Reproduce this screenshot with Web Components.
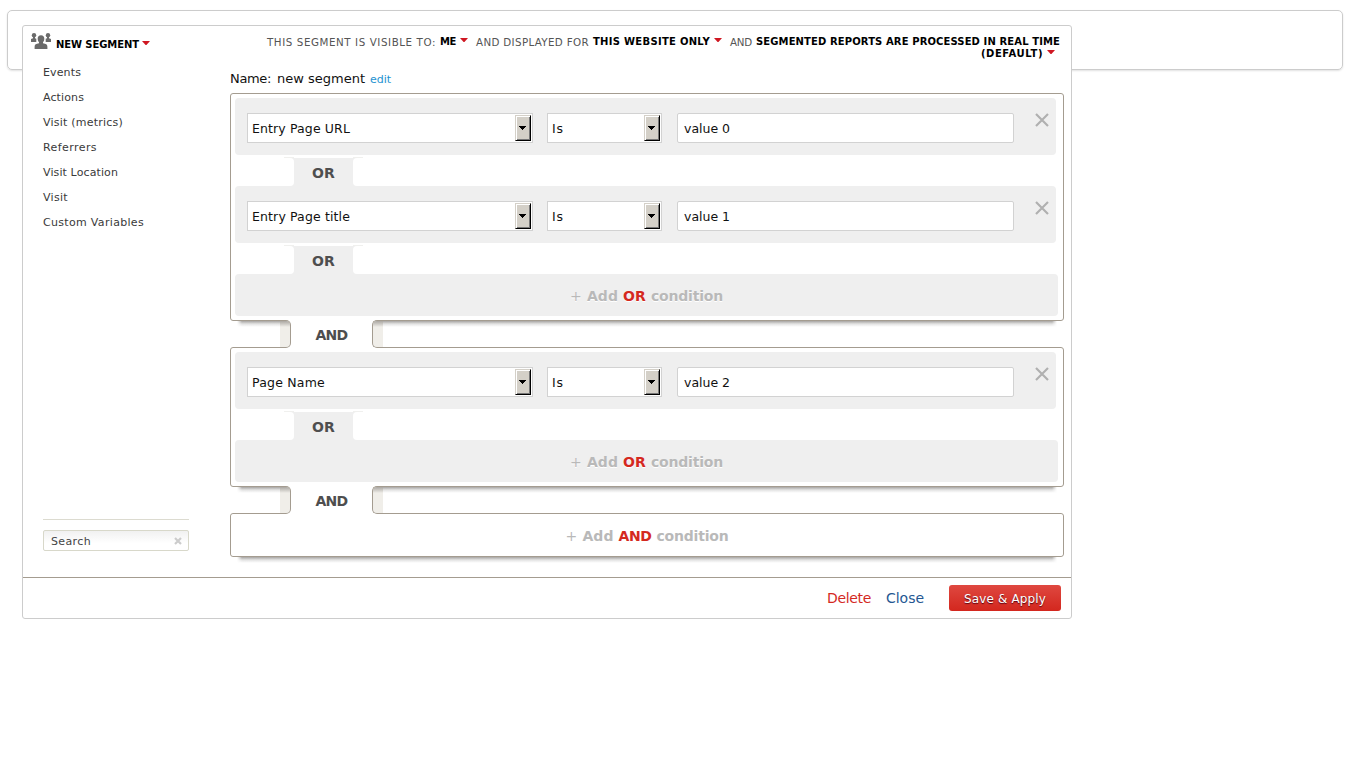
<!DOCTYPE html>
<html lang="en">
<head>
<meta charset="utf-8">
<title>Segment editor</title>
<style>
body{margin:0;background:#fff;font-family:"DejaVu Sans",Verdana,sans-serif;font-size:11px;color:#444}
</style>
</head>
<body>
<segment-page></segment-page>

<template id="t-page">
<style>
:host{display:grid;grid-template-columns:7px 15px 1050px 271px;grid-template-rows:10px 15px 594px}
.bar{grid-column:2/5;grid-row:2/4;height:58px;border:1px solid #ccc;border-radius:5px;box-shadow:0 1px 2px rgba(0,0,0,.12)}
segment-editor{grid-column:3;grid-row:3;z-index:1}
</style>
<div class="bar"></div>
<segment-editor></segment-editor>
</template>

<template id="t-editor">
<style>
:host{display:grid;box-sizing:border-box;width:1050px;height:594px;border:1px solid #ccc;border-radius:3px;background:#fff;grid-template-columns:207px 834px 7px;grid-template-rows:551px 41px}
category-list{grid-column:1}
.main{display:flex;flex-direction:column}
segment-scope{height:35px;margin-top:10px}
.name{display:flex;align-items:baseline;height:22px;line-height:16px;font-size:13px;color:#111}
.name .v{margin-left:6px}
.name a{font-size:11px;color:#1e93d1;margin-left:5px}
editor-footer{grid-column:1/4}
</style>
<category-list></category-list>
<div class="main">
<segment-scope></segment-scope>
<div class="name"><fit-text w="41">Name:</fit-text><fit-text class="v" w="88">new segment</fit-text><a><fit-text w="21">edit</fit-text></a></div>
<condition-group>
<condition-row field="Entry Page URL" w="98" value="value 0"></condition-row>
<or-tab></or-tab>
<condition-row field="Entry Page title" w="98" value="value 1"></condition-row>
<or-tab></or-tab>
<add-condition><fit-text w="12" style="font-weight:400">+</fit-text><fit-text w="31" style="margin:0 5px">Add</fit-text><b><fit-text w="23">OR</fit-text></b><fit-text w="72" style="margin-left:5px">condition</fit-text></add-condition>
</condition-group>
<and-tab></and-tab>
<condition-group>
<condition-row field="Page Name" w="73" value="value 2"></condition-row>
<or-tab></or-tab>
<add-condition><fit-text w="12" style="font-weight:400">+</fit-text><fit-text w="31" style="margin:0 5px">Add</fit-text><b><fit-text w="23">OR</fit-text></b><fit-text w="72" style="margin-left:5px">condition</fit-text></add-condition>
</condition-group>
<and-tab></and-tab>
<condition-group bare>
<add-condition plain><fit-text w="12" style="font-weight:400">+</fit-text><fit-text w="31" style="margin:0 5px">Add</fit-text><b><fit-text w="33">AND</fit-text></b><fit-text w="72" style="margin-left:5px">condition</fit-text></add-condition>
</condition-group>
</div>
<editor-footer></editor-footer>
</template>

<template id="t-list">
<style>
:host{display:flex;flex-direction:column;height:551px}
.head{display:flex;align-items:flex-start;height:34px;padding:7px 0 0 8px;box-sizing:border-box;color:#000;font-weight:700;font-size:10px;line-height:12px}
.head svg{flex:none}
.head fit-text{margin:6px 5px 0 5px}
.head red-caret{margin:8px 0 0 -2px}
ul{list-style:none;margin:0;padding:0 0 0 20px;color:#3a3a3a}
li{height:25px;line-height:25px}
.search{margin:auto 0 26px 20px;width:146px;border-top:1px solid #dcdbd0;padding-top:10px}
.box{box-sizing:border-box;height:21px;border:1px solid #d8d8ca;border-radius:2px;display:flex;align-items:center;justify-content:space-between;padding:1px 6px 0 7px;background:linear-gradient(#f1f1f1,#fff 65%);color:#444}
.box svg{margin-top:-1px}
</style>
<div class="head">
<svg width="20" height="16" viewBox="0 0 20 16" fill="#6a6a6a"><circle cx="3" cy="2.300" r="2.200"/><path d="M2 3.500h2v1.700l1.300.6V9H0V5.900L2 5.200z"/><circle cx="17" cy="2.300" r="2.200"/><path d="M16 3.500h2v1.700l2 .7V9h-5.300V5.800L16 5.200z"/><path d="M10 2.200c2.200 0 3.300 1.300 3.300 3.400 0 1.900-.5 3-1.300 3.700v1c3 .4 4.400 1.400 4.400 3.500V16H3.600v-2.200c0-2.100 1.400-3.100 4.400-3.500v-1C7.200 8.600 6.700 7.500 6.700 5.600c0-2.100 1.100-3.400 3.300-3.400z"/></svg>
<fit-text w="83">NEW SEGMENT</fit-text><red-caret></red-caret>
</div>
<ul>
<li><fit-text w="38">Events</fit-text></li>
<li><fit-text w="41">Actions</fit-text></li>
<li><fit-text w="80">Visit (metrics)</fit-text></li>
<li><fit-text w="54">Referrers</fit-text></li>
<li><fit-text w="75">Visit Location</fit-text></li>
<li><fit-text w="25">Visit</fit-text></li>
<li><fit-text w="101">Custom Variables</fit-text></li>
</ul>
<div class="search"><div class="box"><fit-text w="40">Search</fit-text>
<svg width="8" height="8" viewBox="0 0 8 8"><path d="M1 1l6 6M7 1L1 7" stroke="#ccc" stroke-width="2.2"/></svg></div></div>
</template>

<template id="t-scope">
<style>
:host{display:flex;flex-direction:column;align-items:flex-end;padding-right:4px;font-size:10px;line-height:12px;color:#555}
div{display:flex;height:12px;white-space:nowrap}
.n{font-size:10.300px}
b{color:#000}
red-caret{margin:2px 8px 0 4px}
fit-text+b{margin-left:4px}
</style>
<div><fit-text class="n" w="169">THIS SEGMENT IS VISIBLE TO:</fit-text><b><fit-text w="16">ME</fit-text></b><red-caret></red-caret><fit-text class="n" w="113">AND DISPLAYED FOR</fit-text><b><fit-text w="117">THIS WEBSITE ONLY</fit-text></b><red-caret></red-caret><fit-text class="n" w="22">AND</fit-text><b><fit-text w="304">SEGMENTED REPORTS ARE PROCESSED IN REAL TIME</fit-text></b></div>
<div><b><fit-text w="62">(DEFAULT)</fit-text></b><red-caret style="margin-right:5px"></red-caret></div>
</template>

<template id="t-group">
<style>
:host{display:block;position:relative;box-sizing:border-box;width:834px;border:1px solid #a49c90;border-radius:3px;padding:4px}
:host([bare]){padding:0}
:host::after{content:"";position:absolute;left:6px;right:6px;bottom:-7px;height:6px;background:linear-gradient(rgba(80,76,72,.5),rgba(130,130,130,.22) 50%,rgba(160,160,160,0));-webkit-mask:linear-gradient(90deg,transparent,#000 5px,#000 calc(100% - 5px),transparent)}
</style>
<slot></slot>
</template>

<template id="t-row">
<style>
:host{display:flex;box-sizing:border-box;width:821px;height:57px;background:#efefef;border-radius:4px;padding:15px 7px 0 12px;font-size:12.500px;color:#111}
.s,.i{box-sizing:border-box;height:30px;border:1px solid #d2d2d2;background:#fff;display:flex;align-items:center}
.s{justify-content:space-between;padding:0 1px 0 4px;margin-right:14px}
.s.is{margin-right:15px}
.i{width:337px;border-radius:2px;padding-left:6px}
fit-text{margin-top:1px}
.arr{box-sizing:border-box;width:16px;height:26px;background:#d4d0c8;border:1px solid;border-color:#d4d0c8 #000 #000 #d4d0c8;box-shadow:inset 1px 1px #fff,inset -1px -1px #777;display:flex;align-items:center;justify-content:center}
.x{margin-left:21px}
</style>
<div class="s" style="width:286px"><fit-text class="f"></fit-text><span class="arr"><svg width="8" height="4" viewBox="0 0 8 4" shape-rendering="crispEdges"><path d="M0 0h7v1h-1v1h-1v1h-1v1h-1v-1h-1v-1h-1v-1h-1z"/></svg></span></div>
<div class="s is" style="width:115px"><fit-text w="12">Is</fit-text><span class="arr"><svg width="8" height="4" viewBox="0 0 8 4" shape-rendering="crispEdges"><path d="M0 0h7v1h-1v1h-1v1h-1v1h-1v-1h-1v-1h-1v-1h-1z"/></svg></span></div>
<div class="i"><fit-text class="v" w="46"></fit-text></div>
<svg class="x" width="14" height="14" viewBox="0 0 14 14"><path d="M1 1l12 12M13 1L1 13" stroke="#b0b0b0" stroke-width="2.200"/></svg>
</template>

<template id="t-or">
<style>
:host{display:grid;grid-template-columns:49px 10px 59px 10px;height:29px;margin-top:2px;color:#4e4e4e;font:700 14px "DejaVu Sans",sans-serif}
.m{background:#efefef;display:flex;align-items:center;justify-content:center;margin-top:1px;padding-top:2px}
.l,.r{position:relative;border-top:1px solid #f0f0ee}
.l::before,.r::before{content:"";position:absolute;top:0;bottom:0;background:#efefef;width:5px}
.l::after,.r::after{content:"";position:absolute;inset:0;background:#fff}
.l::before{right:0}.r::before{left:0}
.l::after{border-radius:0 4px 4px 0}.r::after{border-radius:4px 0 0 4px}
</style>
<i></i><div class="l"></div><div class="m"><fit-text w="23">OR</fit-text></div><div class="r"></div>
</template>

<template id="t-and">
<style>
:host{display:grid;grid-template-columns:11px 81px 11px;width:103px;background:#fff;height:28px;margin:-1px 0 -1px 50px;position:relative;z-index:2;color:#4e4e4e;font:700 14px "DejaVu Sans",sans-serif}
.m{display:flex;align-items:center;justify-content:center;padding-top:2px}
.l,.r{background:linear-gradient(rgba(100,95,90,.5),rgba(100,95,90,0) 6px),#f0eee9;border:1px solid #a49c90;background-clip:padding-box}
.l{border-left:0;border-radius:0 5px 5px 0}
.r{border-right:0;border-radius:5px 0 0 5px}
</style>
<div class="l"></div><div class="m"><fit-text w="32">AND</fit-text></div><div class="r"></div>
</template>

<template id="t-add">
<style>
:host{display:flex;box-sizing:border-box;align-items:center;justify-content:center;width:823px;height:42px;padding-top:2px;background:#efefef;border-radius:4px;font:700 14px "DejaVu Sans",sans-serif;color:#b9b9b9;text-shadow:0 1px #fff}
:host([plain]){background:#fff;width:832px}
::slotted(b){color:#d4291f}
</style>
<slot></slot>
</template>

<template id="t-footer">
<style>
:host{display:flex;box-sizing:border-box;height:41px;border-top:1px solid #a49c90;justify-content:flex-end;padding:7px 10px 0 0;font-size:14px;line-height:26px}
.d{color:#d4291f;margin-right:15px}
.c{color:#255792;margin-right:25px}
.b{width:112px;height:26px;border-radius:3px;background:linear-gradient(#df4840,#d3271e);color:#fff;text-align:center;font-size:12px;line-height:28px;text-shadow:0 1px 1px #501}
</style>
<fit-text class="d" w="44">Delete</fit-text><fit-text class="c" w="38">Close</fit-text><div class="b"><fit-text w="82">Save &amp; Apply</fit-text></div>
</template>

<script>
const define = (name, id, init) => customElements.define(name, class extends HTMLElement {
  constructor() {
    super();
    const root = this.attachShadow({mode: "open"});
    root.append(document.getElementById(id).content.cloneNode(true));
    if (init) init(this, root);
  }
});

// Inline label that spreads its letters over the width given in "w".
const labels = new Set();
customElements.define("fit-text", class extends HTMLElement {
  constructor() {
    super();
    this.attachShadow({mode: "open"}).innerHTML = "<style>:host{display:inline-block;white-space:nowrap}</style><slot></slot>";
  }
  connectedCallback() { labels.add(this); }
  fit() {
    const w = +this.getAttribute("w");
    if (!w) return;
    const natural = this.getBoundingClientRect().width;
    const n = this.textContent.length;
    this.style.letterSpacing = ((w - natural) / n).toFixed(3) + "px";
    this.style.width = w + "px";
  }
});
customElements.define("red-caret", class extends HTMLElement {
  constructor() {
    super();
    this.attachShadow({mode: "open"}).innerHTML = '<style>:host{display:block;width:8px;height:4px;flex:none}svg{display:block}</style><svg width="8" height="4" viewBox="0 0 8 4"><path d="M0 0h8L4 4.500z" fill="#cf1722"/></svg>';
  }
});
define("condition-row", "t-row", (host, root) => {
  const f = root.querySelector(".f");
  f.textContent = host.getAttribute("field");
  f.setAttribute("w", host.getAttribute("w"));
  root.querySelector(".v").textContent = host.getAttribute("value");
});
define("or-tab", "t-or");
define("and-tab", "t-and");
define("add-condition", "t-add");
define("condition-group", "t-group");
define("segment-scope", "t-scope");
define("category-list", "t-list");
define("editor-footer", "t-footer");
define("segment-editor", "t-editor");
define("segment-page", "t-page");
labels.forEach(l => l.fit());
</script>
</body>
</html>
